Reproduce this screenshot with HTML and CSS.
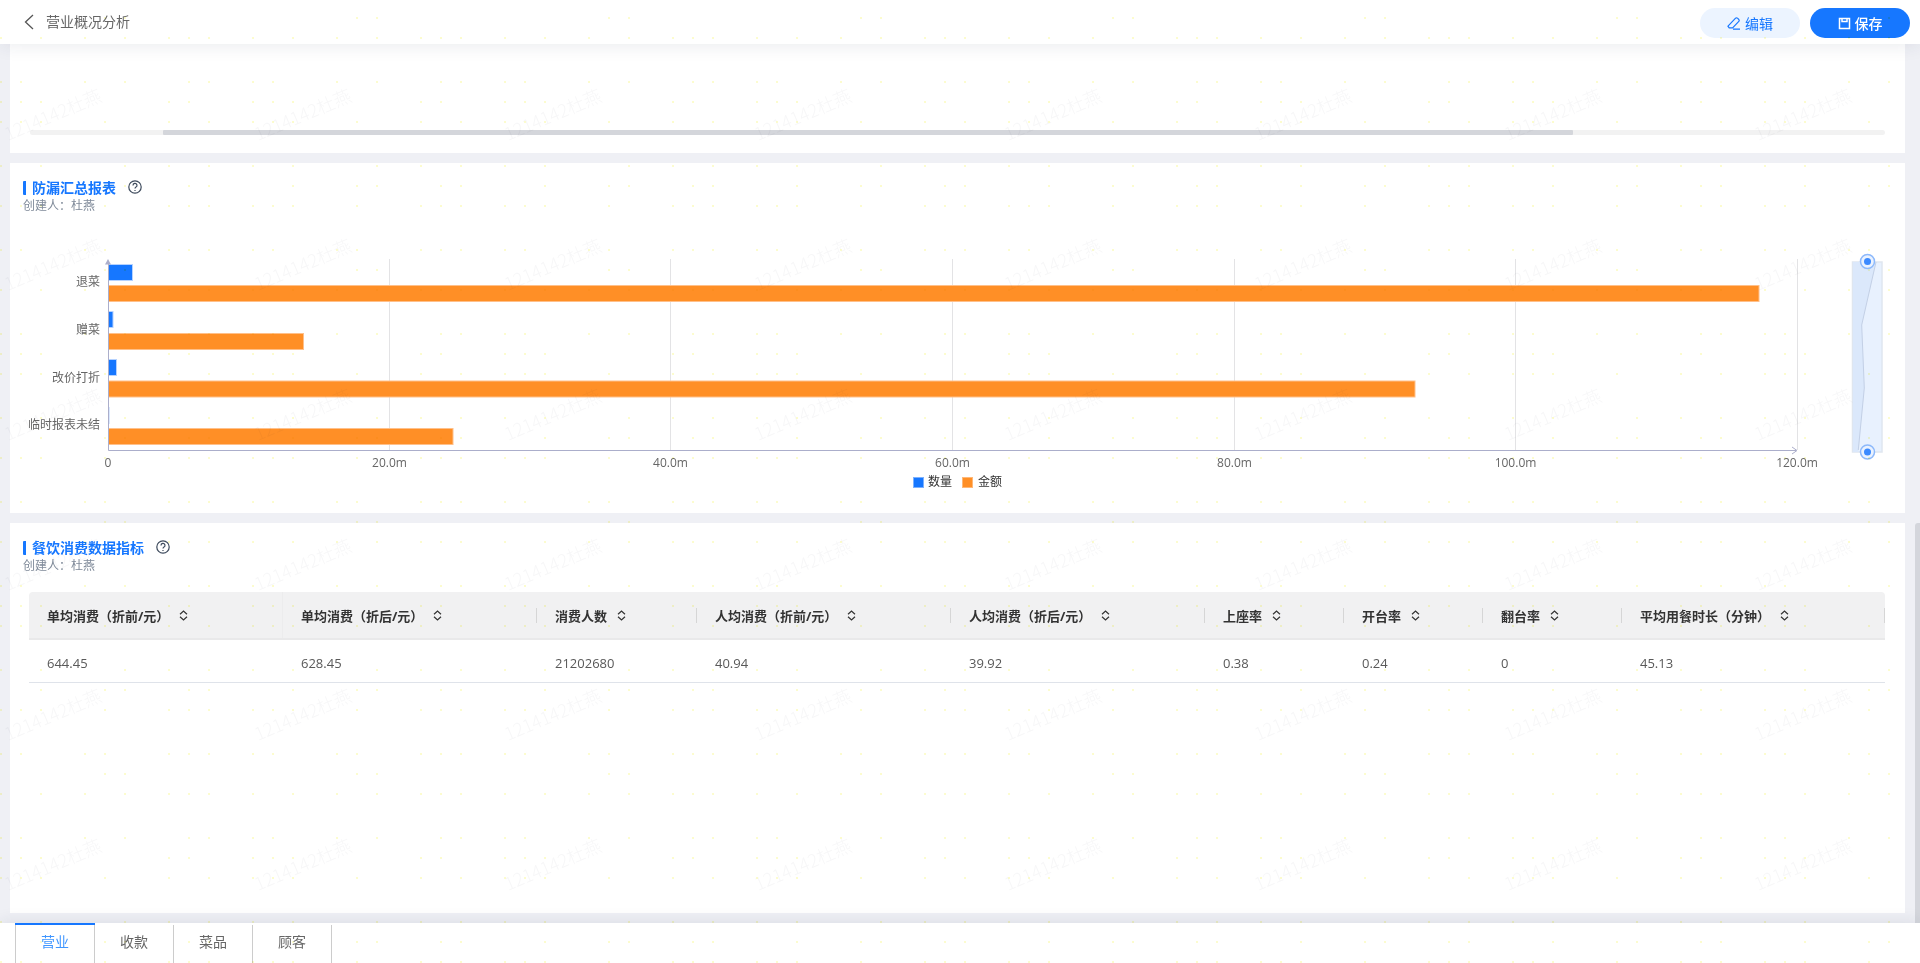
FILE: index.html
```html
<!DOCTYPE html>
<html lang="zh-CN">
<head>
<meta charset="utf-8">
<title>营业概况分析</title>
<link rel="stylesheet" href="styles.css">
</head>
<body>
<div class="app">
  <header class="topbar">
    <div class="topbar-left">
      <svg class="back-icon" viewBox="0 0 10 16" width="10" height="16"><path d="M9 1 L1.5 8 L9 15" /></svg>
      <span class="page-title">营业概况分析</span>
    </div>
    <div class="topbar-actions">
      <button class="btn btn-light">
        <svg class="btn-icon" viewBox="0 0 14 14" width="14" height="14"><path d="M1 10.2 L8.6 2.2 a1.3 1.3 0 0 1 1.9 0 l1.3 1.3 a1.3 1.3 0 0 1 0 1.9 L5.6 11.8 H2.2 L1 10.2 Z M6 13.2 H13" /></svg>
        <span>编辑</span>
      </button>
      <button class="btn btn-primary">
        <svg class="btn-icon btn-icon-bold" viewBox="0 0 13 13" width="13" height="13"><path d="M1.5 1.5 H11.5 V11.5 H1.5 Z M4 1.5 V4.5 H9 V1.5" /></svg>
        <span>保存</span>
      </button>
    </div>
  </header>

  <main class="main">
    <section class="card card-scroll">
      <div class="hscroll"><div class="hscroll-thumb"></div></div>
    </section>

    <section class="card card-chart">
      <div class="card-head">
        <div class="card-title-row">
          <h2 class="card-title">防漏汇总报表</h2>
          <svg class="help-icon" viewBox="0 0 14 14" width="14" height="14"><circle cx="7" cy="7" r="6.2"/><path d="M5 5.4 a2 2 0 1 1 3 1.7 c-.7 .4 -1 .8 -1 1.5"/><path d="M7 10 v1"/></svg>
        </div>
        <div class="card-creator">创建人：杜燕</div>
      </div>
      <svg class="chart" viewBox="10 214 1895 299" width="1895" height="299">
        <g class="grid">
          <path d="M389.5 259V450M670.5 259V450M952.5 259V450M1234.5 259V450M1515.5 259V450M1797.5 259V450"/>
        </g>
        <g class="bars-blue">
          <rect x="108.5" y="264.5" width="24" height="16"/>
          <rect x="108.5" y="311.5" width="4.5" height="16"/>
          <rect x="108.5" y="359.5" width="8" height="16"/>
          <rect x="108.5" y="407.5" width="0.5" height="16"/>
        </g>
        <g class="bars-orange">
          <rect x="108.5" y="285.5" width="1650.5" height="16"/>
          <rect x="108.5" y="333.5" width="195" height="16"/>
          <rect x="108.5" y="381" width="1306.5" height="16"/>
          <rect x="108.5" y="428.5" width="344.5" height="16"/>
        </g>
        <g class="axis">
          <path d="M108.5 262V450.5H1796"/>
          <path class="axis-arrow" d="M108 259L105 264.5H111Z"/>
          <path d="M1792 447L1797 450.5L1792 454"/>
        </g>
        <g class="label label-y">
          <text x="100" y="286">退菜</text>
          <text x="100" y="334">赠菜</text>
          <text x="100" y="382">改价打折</text>
          <text x="100" y="429">临时报表未结</text>
        </g>
        <g class="label label-x">
          <text x="108" y="467">0</text>
          <text x="389.5" y="467">20.0m</text>
          <text x="670.5" y="467">40.0m</text>
          <text x="952.5" y="467">60.0m</text>
          <text x="1234.5" y="467">80.0m</text>
          <text x="1515.5" y="467">100.0m</text>
          <text x="1797" y="467">120.0m</text>
        </g>
        <g class="legend">
          <rect class="legend-blue" x="913.5" y="477.5" width="10" height="10"/>
          <text x="928" y="486">数量</text>
          <rect class="legend-orange" x="962.5" y="477.5" width="10" height="10"/>
          <text x="978" y="486">金额</text>
        </g>
        <g class="zoom">
          <rect class="zoom-body" x="1852.5" y="262" width="29.5" height="190"/>
          <path class="zoom-area" d="M1853 262H1876L1861.7 325L1864.3 388L1858.3 452H1853Z"/>
          <path class="zoom-line" d="M1876 262L1861.7 325L1864.3 388L1858.3 450"/>
          <circle class="zoom-ring" cx="1867.5" cy="261.5" r="7"/>
          <circle class="zoom-dot" cx="1867.5" cy="261.5" r="3.5"/>
          <circle class="zoom-ring" cx="1867.5" cy="452" r="7"/>
          <circle class="zoom-dot" cx="1867.5" cy="452" r="3.5"/>
        </g>
      </svg>
    </section>

    <section class="card card-table">
      <div class="card-head">
        <div class="card-title-row">
          <h2 class="card-title">餐饮消费数据指标</h2>
          <svg class="help-icon" viewBox="0 0 14 14" width="14" height="14"><circle cx="7" cy="7" r="6.2"/><path d="M5 5.4 a2 2 0 1 1 3 1.7 c-.7 .4 -1 .8 -1 1.5"/><path d="M7 10 v1"/></svg>
        </div>
        <div class="card-creator">创建人：杜燕</div>
      </div>
      <div class="table">
        <div class="row row-head">
          <div class="th"><span>单均消费（折前/元）</span><svg class="sort" viewBox="0 0 9 11" width="9" height="11"><path d="M1 4.2L4.5 1L8 4.2M1 6.8L4.5 10L8 6.8"/></svg></div>
          <div class="th"><span>单均消费（折后/元）</span><svg class="sort" viewBox="0 0 9 11" width="9" height="11"><path d="M1 4.2L4.5 1L8 4.2M1 6.8L4.5 10L8 6.8"/></svg></div>
          <div class="th"><span>消费人数</span><svg class="sort" viewBox="0 0 9 11" width="9" height="11"><path d="M1 4.2L4.5 1L8 4.2M1 6.8L4.5 10L8 6.8"/></svg></div>
          <div class="th"><span>人均消费（折前/元）</span><svg class="sort" viewBox="0 0 9 11" width="9" height="11"><path d="M1 4.2L4.5 1L8 4.2M1 6.8L4.5 10L8 6.8"/></svg></div>
          <div class="th"><span>人均消费（折后/元）</span><svg class="sort" viewBox="0 0 9 11" width="9" height="11"><path d="M1 4.2L4.5 1L8 4.2M1 6.8L4.5 10L8 6.8"/></svg></div>
          <div class="th"><span>上座率</span><svg class="sort" viewBox="0 0 9 11" width="9" height="11"><path d="M1 4.2L4.5 1L8 4.2M1 6.8L4.5 10L8 6.8"/></svg></div>
          <div class="th"><span>开台率</span><svg class="sort" viewBox="0 0 9 11" width="9" height="11"><path d="M1 4.2L4.5 1L8 4.2M1 6.8L4.5 10L8 6.8"/></svg></div>
          <div class="th"><span>翻台率</span><svg class="sort" viewBox="0 0 9 11" width="9" height="11"><path d="M1 4.2L4.5 1L8 4.2M1 6.8L4.5 10L8 6.8"/></svg></div>
          <div class="th"><span>平均用餐时长（分钟）</span><svg class="sort" viewBox="0 0 9 11" width="9" height="11"><path d="M1 4.2L4.5 1L8 4.2M1 6.8L4.5 10L8 6.8"/></svg></div>
        </div>
        <div class="row row-body">
          <div class="td">644.45</div>
          <div class="td">628.45</div>
          <div class="td">21202680</div>
          <div class="td">40.94</div>
          <div class="td">39.92</div>
          <div class="td">0.38</div>
          <div class="td">0.24</div>
          <div class="td">0</div>
          <div class="td">45.13</div>
        </div>
      </div>
    </section>
    <div class="vscroll-thumb"></div>
  </main>

  <nav class="tabs">
    <div class="tab tab-active">营业</div>
    <div class="tab">收款</div>
    <div class="tab">菜品</div>
    <div class="tab tab-last">顾客</div>
  </nav>

  <svg class="watermark" width="1920" height="963">
    <defs>
      <pattern id="wm" width="250" height="150" patternUnits="userSpaceOnUse">
        <text class="wm-text" transform="translate(8 141) rotate(-23)">1214142杜燕</text>
      </pattern>
      <pattern id="dots" width="252" height="252" patternUnits="userSpaceOnUse">
        <path class="wm-dots" d="M1 206h.01M21 206h.01M41 206h.01M105 206h.01M169 206h.01M189 206h.01M209 206h.01M1 250h.01M21 250h.01M85 250h.01M105 250h.01M169 250h.01M189 250h.01M209 250h.01M105 18h.01M125 18h.01M1 38h.01M41 38h.01M85 38h.01M125 38h.01M169 38h.01M189 38h.01M209 38h.01M1 82h.01M21 82h.01M85 82h.01M125 82h.01M189 82h.01M209 82h.01M1 102h.01M21 102h.01M41 102h.01M169 102h.01M189 102h.01M1 122h.01M21 122h.01M41 122h.01M105 122h.01M169 122h.01M209 122h.01M1 166h.01M41 166h.01M125 166h.01M169 166h.01M209 166h.01M41 186h.01M105 186h.01M125 186h.01M189 186h.01M209 186h.01"/>
      </pattern>
    </defs>
    <rect width="1920" height="963" fill="url(#wm)"/>
    <rect width="1920" height="963" fill="url(#dots)"/>
  </svg>
</div>
</body>
</html>
```
FILE: styles.css
```css
* { box-sizing: border-box; }
html, body { margin: 0; padding: 0; height: 100%; overflow: hidden; }
body {
  font-family: "Open Sans", "Noto Sans CJK SC", sans-serif;
  font-size: 14px;
  color: #666;
  background: #fff;
}
.app {
  position: relative;
  display: flex;
  flex-direction: column;
  width: 1920px;
  height: 963px;
  overflow: hidden;
}

/* top bar */
.topbar {
  position: relative;
  z-index: 2;
  flex: 0 0 44px;
  display: flex;
  align-items: center;
  justify-content: space-between;
  padding: 0 10px 0 24px;
  background: #fff;
  box-shadow: 0 2px 18px rgba(30, 40, 80, .09);
}
.topbar-left { display: flex; align-items: center; gap: 12px; }
.back-icon { fill: none; stroke: #555; stroke-width: 1.3; }
.page-title { font-size: 14px; color: #666; line-height: 44px; }
.topbar-actions { display: flex; gap: 10px; margin-top: 2px; }
.btn {
  display: flex;
  align-items: center;
  justify-content: center;
  gap: 4px;
  width: 100px;
  height: 30px;
  padding: 0;
  border: 0;
  border-radius: 15px;
  font-family: inherit;
  font-size: 14px;
}
.btn-light { background: #ecf4ff; color: #1677ff; }
.btn-primary { background: #1677ff; color: #fff; font-weight: 500; }
.btn-icon { fill: none; stroke: currentColor; stroke-width: 1.2; }
.btn-icon-bold { stroke-width: 1.5; }

/* main */
.main {
  position: relative;
  flex: 1 1 auto;
  display: flex;
  flex-direction: column;
  gap: 10px;
  padding: 0 15px 10px 10px;
  background: #eff0f5;
  min-height: 0;
}
.card { background: #fff; }
.card-scroll { flex: 0 0 109px; padding: 86px 20px 0; }
.card-chart { flex: 0 0 350px; }
.card-table { flex: 0 0 390px; }
.hscroll { height: 5px; background: #f2f2f2; border-radius: 3px; }
.hscroll-thumb {
  width: 1410px;
  height: 5px;
  margin-left: 133px;
  background: #d4d6db;
  border-radius: 1px;
}
.vscroll-thumb {
  position: absolute;
  right: 0;
  top: 479px;
  width: 5px;
  height: 400px;
  background: #d4d6dc;
  border-radius: 3px 0 0 0;
}
.card-head { padding: 18px 13px 0; }
.card-title-row { display: flex; align-items: center; gap: 12px; height: 14px; }
.card-title {
  margin: 0;
  padding-left: 6px;
  border-left: 3px solid #1677ff;
  border-radius: 1px;
  font-size: 14px;
  line-height: 14px;
  font-weight: 700;
  color: #1677ff;
}
.help-icon { fill: none; stroke: #3d4a5c; stroke-width: 1.2; margin-top: -2px; }
.card-creator { margin-top: 3px; font-size: 12px; line-height: 16px; color: #7f8a99; }

/* chart */
.chart { display: block; }
.grid path { fill: none; stroke: #e3e3e5; stroke-width: 1; }
.bars-blue rect { fill: #1677ff; stroke: #b5d2ff; stroke-width: 1; }
.bars-orange rect { fill: #ff8f26; stroke: #ffc08a; stroke-width: 1; }
.axis path { fill: none; stroke: #abaecb; stroke-width: 1; }
.axis .axis-arrow { fill: #abaecb; stroke: none; }
.label text { font-size: 12px; fill: #666; }
.label-y text { text-anchor: end; }
.label-x text { text-anchor: middle; }
.legend text { font-size: 12px; fill: #333; }
.legend-blue { fill: #1677ff; stroke: #7cb1ff; }
.legend-orange { fill: #ff8f26; stroke: #ffb877; }
.zoom-body { fill: #e8f1fe; stroke: #dfe6f0; stroke-width: 1.5; }
.zoom-area { fill: #dbe8fb; }
.zoom-line { fill: none; stroke: #c3d0e6; stroke-width: 1; }
.zoom-ring { fill: #eaf2ff; stroke: #8db9fb; stroke-width: 1.5; }
.zoom-dot { fill: #3b8aff; }

/* table */
.table { margin: 18px 20px 0 19px; font-size: 13px; }
.row {
  display: grid;
  grid-template-columns: 254px 254px 160px 254px 254px 139px 139px 139px 1fr;
}
.row-head {
  height: 48px;
  background: #f1f1f2;
  border-bottom: 2px solid #e9e9ea;
  border-radius: 4px 4px 0 0;
}
.row-body { height: 43px; padding-top: 3px; border-bottom: 1px solid #dfe3ea; }
.th {
  position: relative;
  display: flex;
  align-items: center;
  gap: 10px;
  padding-left: 18px;
  font-weight: 700;
  color: #333;
}
.th::after {
  content: "";
  position: absolute;
  right: 0;
  top: 16px;
  width: 1px;
  height: 15px;
  background: #d6d6d6;
}
.th:first-child::after { top: 0; height: 100%; background: #ececed; }
.sort { fill: none; stroke: #333; stroke-width: 1.2; }
.td { display: flex; align-items: center; padding-left: 18px; color: #595959; }

/* tabs */
.tabs {
  position: relative;
  z-index: 2;
  flex: 0 0 40px;
  display: flex;
  padding: 0 0 0 15px;
  background: #fff;
  box-shadow: 0 -2px 16px rgba(30, 40, 80, .09);
}
.tab {
  width: 79px;
  margin-top: 2px;
  border-left: 1px solid #ccc;
  text-align: center;
  line-height: 34px;
  font-size: 14px;
  color: #666;
}
.tab-active {
  position: relative;
  color: #4096ff;
}
.tab-active::before {
  content: "";
  position: absolute;
  left: -1px;
  right: -1px;
  top: -2px;
  height: 2px;
  background: #1677ff;
}
.tab-last { width: 80px; border-right: 1px solid #ccc; }

/* watermark */
.watermark {
  position: absolute;
  left: 0;
  top: 0;
  z-index: 5;
  pointer-events: none;
  mix-blend-mode: multiply;
}
.wm-text { font-size: 18px; fill: #f7f7f8; font-weight: 300; font-family: "Noto Sans CJK SC", sans-serif; }
.wm-dots { fill: none; stroke: #fbfbb4; stroke-width: 2; stroke-linecap: round; opacity: .85; }
```
